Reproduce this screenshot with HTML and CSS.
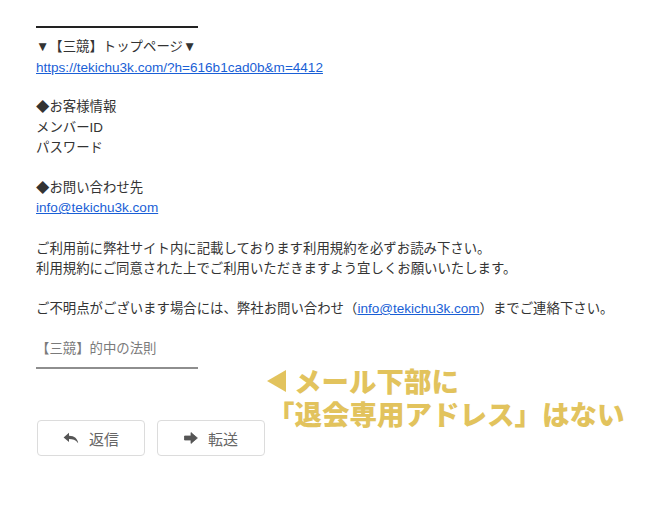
FILE: index.html
```html
<!DOCTYPE html>
<html lang="ja">
<head>
<meta charset="utf-8">
<link rel="stylesheet" href="styles.css">
</head>
<body>
<div class="page">
  <div class="mail">
    <div class="rule rule-top"></div>
    <div class="body">
      <p>▼【三競】トップページ▼</p>
      <p class="url"><a href="#">https://tekichu3k.com/?h=616b1cad0b&amp;m=4412</a></p>
      <p class="blank"></p>
      <p>◆お客様情報</p>
      <p>メンバーID</p>
      <p>パスワード</p>
      <p class="blank"></p>
      <p>◆お問い合わせ先</p>
      <p><a href="#">info@tekichu3k.com</a></p>
      <p class="blank"></p>
      <p>ご利用前に弊社サイト内に記載しております利用規約を必ずお読み下さい。</p>
      <p>利用規約にご同意された上でご利用いただきますよう宜しくお願いいたします。</p>
      <p class="blank"></p>
      <p>ご不明点がございます場合には、弊社お問い合わせ（<a href="#">info@tekichu3k.com</a>）までご連絡下さい。</p>
      <p class="blank"></p>
      <p class="sign">【三競】的中の法則</p>
    </div>
    <div class="rule rule-bottom"></div>
    <div class="lower">
      <div class="buttons">
        <button class="btn">
          <svg class="ico" width="16" height="12" viewBox="0 0 16 12"><path d="M6 0.8 L0.6 5.4 L6 10 V7.1 C9.8 7.1 12.6 8 15.2 11.2 C14.6 6.6 11.6 3.9 6 3.7 Z" fill="#555"/></svg>
          <span>返信</span>
        </button>
        <button class="btn">
          <svg class="ico" width="14" height="12" viewBox="0 0 14 12"><path d="M0.5 4 H7 V0.6 L13.4 6 L7 11.4 V8 H0.5 Z" fill="#555" stroke="#555" stroke-width="0.8" stroke-linejoin="round"/></svg>
          <span>転送</span>
        </button>
      </div>
      <div class="note">
        <p class="note-line"><span class="tri"></span>メール下部に</p>
        <p class="note-line">「退会専用アドレス」はない</p>
      </div>
    </div>
  </div>
</div>
</body>
</html>
```

FILE: styles.css
```css
html, body {
  margin: 0;
  padding: 0;
  background: #ffffff;
}
.page {
  width: 654px;
  height: 524px;
  overflow: hidden;
}
.mail {
  padding: 26px 0 0 36px;
}
.rule {
  width: 162px;
  height: 2px;
}
.rule-top {
  background: #222222;
}
.rule-bottom {
  background: #8e8e8e;
  margin-top: 8px;
}
.body {
  margin-top: 9px;
  font-family: "Liberation Sans", "Noto Sans CJK JP", sans-serif;
  font-size: 13.4px;
  line-height: 20.15px;
  color: #333333;
}
.body p {
  margin: 0;
  white-space: nowrap;
}
.body p.blank {
  height: 20.15px;
}
.body p.url {
  padding-top: 1px;
  margin-bottom: -1px;
}
.body a {
  color: #1a5fd6;
  text-decoration: underline;
  font-size: 13.55px;
}
.body p.sign {
  color: #7a7a7a;
}
.lower {
  display: flex;
  align-items: flex-start;
}
.buttons {
  display: flex;
  gap: 12px;
  margin-top: 51px;
  padding-left: 1px;
}
.btn {
  width: 108px;
  height: 36px;
  border: 1px solid #dcdcdc;
  border-radius: 4px;
  background: #ffffff;
  display: flex;
  align-items: center;
  justify-content: center;
  gap: 10px;
  padding: 0;
  font-family: "Noto Sans CJK JP", sans-serif;
  font-size: 15px;
  color: #666666;
}
.btn .ico {
  display: block;
}
.note {
  margin-left: 2px;
  margin-top: -5px;
  font-family: "Noto Sans CJK JP", sans-serif;
  font-weight: 900;
  font-size: 27.5px;
  line-height: 33px;
  color: #e2c35d;
}
.note-line {
  margin: 0;
  white-space: nowrap;
  display: flex;
  align-items: center;
}
.tri {
  width: 0;
  height: 0;
  border-top: 11px solid transparent;
  border-bottom: 11px solid transparent;
  border-right: 19px solid #e2c35d;
  margin-right: 8px;
}
```
